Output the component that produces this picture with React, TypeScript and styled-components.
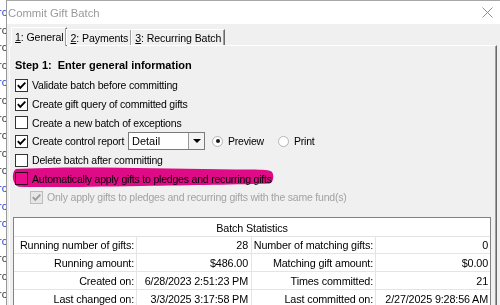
import React from "react";
import styled, { createGlobalStyle } from "styled-components";

const GlobalStyle = createGlobalStyle`
  html, body {
    margin: 0;
    padding: 0;
    background: #ffffff;
    overflow: hidden;
  }
  body {
    font-family: "Liberation Sans", Arial, sans-serif;
    font-size: 11px;
    color: #000;
  }
`;

const Screen = styled.div`
  display: flex;
  width: 500px;
  height: 305px;
  overflow: hidden;
`;

// the window behind the dialog, only a sliver of it shows
const BehindStrip = styled.div`
  width: 6px;
  flex: none;
  overflow: hidden;
  display: flex;
  flex-direction: column;
  padding-top: 6px;
  gap: 4px;
  background: #fff;
`;

const BehindText = styled.span<{ $blue: boolean }>`
  display: block;
  height: 13.6px;
  line-height: 13.6px;
  font-size: 11px;
  margin-left: -2px;
  white-space: nowrap;
  color: ${({ $blue }) => ($blue ? "#2b3fd6" : "#3a3a3a")};
`;

const Dialog = styled.div`
  flex: 1;
  display: flex;
  flex-direction: column;
  border-left: 1px solid #9a9a9a;
  border-top: 1px solid #a8a8a8;
  background: #f0f0f0;
`;

const TitleBar = styled.div`
  height: 23px;
  flex: none;
  display: flex;
  align-items: center;
  justify-content: space-between;
  background: #ffffff;
  padding: 0 7px 0 1px;
`;

const TitleText = styled.span`
  font-family: "Liberation Sans", Arial, sans-serif;
  font-size: 11.3px;
  color: #9a9a9a;
`;

const CloseIcon = () => (
  <svg width="11" height="11" viewBox="0 0 11 11">
    <path d="M0.5 0.5 L10.5 10.5 M10.5 0.5 L0.5 10.5" stroke="#8e8e8e" strokeWidth="1" />
  </svg>
);

const Body = styled.div`
  flex: 1;
  padding: 3px 3px 0 2px;
  display: flex;
  flex-direction: column;
`;

const TabRow = styled.div`
  display: flex;
  align-items: flex-end;
  height: 18px;
  padding-left: 2px;
  position: relative;
  z-index: 1;
`;

const Tab = styled.div<{ $active?: boolean }>`
  height: ${({ $active }) => ($active ? "19px" : "16px")};
  margin-bottom: ${({ $active }) => ($active ? "-1px" : "0")};
  margin-left: ${({ $active }) => ($active ? "0" : "-1px")};
  padding: 0 3px 0 3px;
  padding-top: ${({ $active }) => ($active ? "3px" : "0")};
  display: flex;
  align-items: ${({ $active }) => ($active ? "flex-start" : "center")};
  box-sizing: border-box;
  background: #f0f0f0;
  border-top: 1px solid #ffffff;
  border-left: 1px solid #ffffff;
  border-right: 1px solid #6a6a6a;
  box-shadow: inset -1px 0 0 #a0a0a0;
  font-size: 10.6px;
  letter-spacing: -0.1px;
  white-space: nowrap;

  u {
    text-decoration: underline;
    text-underline-offset: 1px;
  }
`;

const Panel = styled.div`
  flex: 1;
  border-top: 1px solid #ffffff;
  border-left: 1px solid #ffffff;
  border-right: 1px solid #6a6a6a;
  box-shadow: inset -1px 0 0 #a0a0a0;
  padding: 12px 5px 0 5px;
  display: flex;
  flex-direction: column;
`;

const StepHeading = styled.div`
  font-weight: bold;
  font-size: 11px;
  height: 14px;
  line-height: 14px;
  margin-bottom: 4px;
  white-space: pre;
`;

const OptionRow = styled.div<{ $indent?: number; $disabled?: boolean }>`
  position: relative;
  display: flex;
  align-items: center;
  height: 18.7px;
  padding-left: ${({ $indent }) => $indent ?? 0}px;
  color: ${({ $disabled }) => ($disabled ? "#a2a2a2" : "#000")};
  font-size: 10.5px;
  letter-spacing: -0.2px;
  white-space: nowrap;
`;

const Box = styled.span<{ $disabled?: boolean }>`
  width: 13px;
  height: 13px;
  box-sizing: border-box;
  flex: none;
  border: 1px solid ${({ $disabled }) => ($disabled ? "#bcbcbc" : "#333333")};
  background: ${({ $disabled }) => ($disabled ? "#e6e6e6" : "#ffffff")};
  display: flex;
  align-items: center;
  justify-content: center;
  margin-right: 4px;
  position: relative;
  z-index: 1;
`;

const Checkbox = ({ checked, disabled }: { checked?: boolean; disabled?: boolean }) => (
  <Box $disabled={disabled}>
    {checked && (
      <svg width="11" height="11" viewBox="0 0 11 11">
        <path
          d="M1.8 5.2 L4.3 7.8 L9.3 2.6"
          fill="none"
          stroke={disabled ? "#9a9a9a" : "#000"}
          strokeWidth="1.9"
        />
      </svg>
    )}
  </Box>
);

const OptionLabel = styled.span<{ $width?: number }>`
  position: relative;
  z-index: 1;
  ${({ $width }) => ($width ? `width: ${$width}px; flex: none;` : "")}
`;

const Select = styled.div`
  width: 77px;
  height: 18px;
  flex: none;
  box-sizing: border-box;
  display: flex;
  border: 1px solid #7a7a7a;
  background: #fff;
  margin-right: 7px;
`;

const SelectValue = styled.span`
  flex: 1;
  padding-left: 3px;
  line-height: 16px;
  font-size: 11px;
  letter-spacing: 0;
`;

const SelectButton = styled.span`
  width: 15px;
  flex: none;
  background: #f3f3f3;
  border-left: 1px solid #9a9a9a;
  display: flex;
  align-items: center;
  justify-content: center;

  &::after {
    content: "";
    border-left: 4px solid transparent;
    border-right: 4px solid transparent;
    border-top: 4px solid #000;
  }
`;

const RadioCircle = styled.span<{ $on?: boolean }>`
  width: 11px;
  height: 11px;
  flex: none;
  box-sizing: border-box;
  border-radius: 50%;
  border: 1px solid #b4b4b4;
  background: #fff;
  margin-right: 5px;
  display: flex;
  align-items: center;
  justify-content: center;

  &::after {
    content: "";
    width: 4px;
    height: 4px;
    border-radius: 50%;
    background: ${({ $on }) => ($on ? "#1a1a1a" : "transparent")};
  }
`;

const RadioLabel = styled.span`
  width: 50px;
`;

const Highlight = styled.svg`
  position: absolute;
  left: -4px;
  top: -2.5px;
  mix-blend-mode: multiply;
  z-index: 2;
  pointer-events: none;
`;

const StatsBox = styled.div`
  margin: 10px 0 0 -2px;
  width: 478px;
  box-sizing: border-box;
  border: 1px solid #828282;
  border-bottom: none;
  background: #ffffff;
  display: grid;
  grid-template-columns: 123px 115px 124px 1fr;
  grid-auto-rows: 18px;
  font-size: 10.8px;
  letter-spacing: -0.15px;
`;

const StatsTitle = styled.div`
  grid-column: 1 / -1;
  height: 19px;
  line-height: 21px;
  text-align: center;
  border-bottom: 1px solid #e4e4e4;
  box-sizing: border-box;
`;

const Cell = styled.div<{ $last?: boolean; $label?: boolean }>`
  box-sizing: border-box;
  text-align: right;
  padding-right: ${({ $last, $label }) => ($last ? "2px" : $label ? "2px" : "3px")};
  line-height: 18px;
  border-bottom: 1px solid #e4e4e4;
  border-right: ${({ $last }) => ($last ? "none" : "1px solid #e4e4e4")};
  white-space: nowrap;
`;

const behind = [true, false, false, false, true, false, false, false, false, false, true, true, true, true, false, false, false];

const stats: [string, string, string, string][] = [
  ["Running number of gifts:", "28", "Number of matching gifts:", "0"],
  ["Running amount:", "$486.00", "Matching gift amount:", "$0.00"],
  ["Created on:", "6/28/2023 2:51:23 PM", "Times committed:", "21"],
  ["Last changed on:", "3/3/2025 3:17:58 PM", "Last committed on:", "2/27/2025 9:28:56 AM"],
];

const App: React.FC = () => {
  return (
    <Screen>
      <GlobalStyle />
      <BehindStrip>
        {behind.map((b, i) => (
          <BehindText key={i} $blue={b}>
            rc
          </BehindText>
        ))}
      </BehindStrip>

      <Dialog>
        <TitleBar>
          <TitleText>Commit Gift Batch</TitleText>
          <CloseIcon />
        </TitleBar>

        <Body>
          <TabRow>
            <Tab $active>
              <span>
                <u>1</u>: General
              </span>
            </Tab>
            <Tab>
              <span>
                <u>2</u>: Payments
              </span>
            </Tab>
            <Tab>
              <span>
                <u>3</u>: Recurring Batch
              </span>
            </Tab>
          </TabRow>

          <Panel>
            <StepHeading>Step 1:  Enter general information</StepHeading>

            <OptionRow>
              <Checkbox checked />
              <OptionLabel>Validate batch before committing</OptionLabel>
            </OptionRow>
            <OptionRow>
              <Checkbox checked />
              <OptionLabel>Create gift query of committed gifts</OptionLabel>
            </OptionRow>
            <OptionRow>
              <Checkbox />
              <OptionLabel>Create a new batch of exceptions</OptionLabel>
            </OptionRow>
            <OptionRow>
              <Checkbox checked />
              <OptionLabel $width={96}>Create control report</OptionLabel>
              <Select>
                <SelectValue>Detail</SelectValue>
                <SelectButton />
              </Select>
              <RadioCircle $on />
              <RadioLabel>Preview</RadioLabel>
              <RadioCircle />
              <span>Print</span>
            </OptionRow>
            <OptionRow>
              <Checkbox />
              <OptionLabel>Delete batch after committing</OptionLabel>
            </OptionRow>
            <OptionRow>
              <Checkbox />
              <OptionLabel>Automatically apply gifts to pledges and recurring gifts</OptionLabel>
              <Highlight width="264" height="22" viewBox="0 0 264 22">
                <path
                  d="M5,2 C30,0.5 70,0 110,0.8 C150,1.6 200,2.2 240,2.6 C252,2.8 259,3 261,5 C263,8 263,14 259,16.5 C230,17.5 180,18.2 130,19 C80,19.8 35,20.5 8,19.8 C1,18.5 0,5 5,2 Z"
                  fill="#ec0a8e"
                />
              </Highlight>
            </OptionRow>
            <OptionRow $indent={15} $disabled>
              <Checkbox checked disabled />
              <OptionLabel>Only apply gifts to pledges and recurring gifts with the same fund(s)</OptionLabel>
            </OptionRow>

            <StatsBox>
              <StatsTitle>Batch Statistics</StatsTitle>
              {stats.map((row) => (
                <React.Fragment key={row[0]}>
                  <Cell $label>{row[0]}</Cell>
                  <Cell>{row[1]}</Cell>
                  <Cell $label>{row[2]}</Cell>
                  <Cell $last>{row[3]}</Cell>
                </React.Fragment>
              ))}
            </StatsBox>
          </Panel>
        </Body>
      </Dialog>
    </Screen>
  );
};

export default App;
